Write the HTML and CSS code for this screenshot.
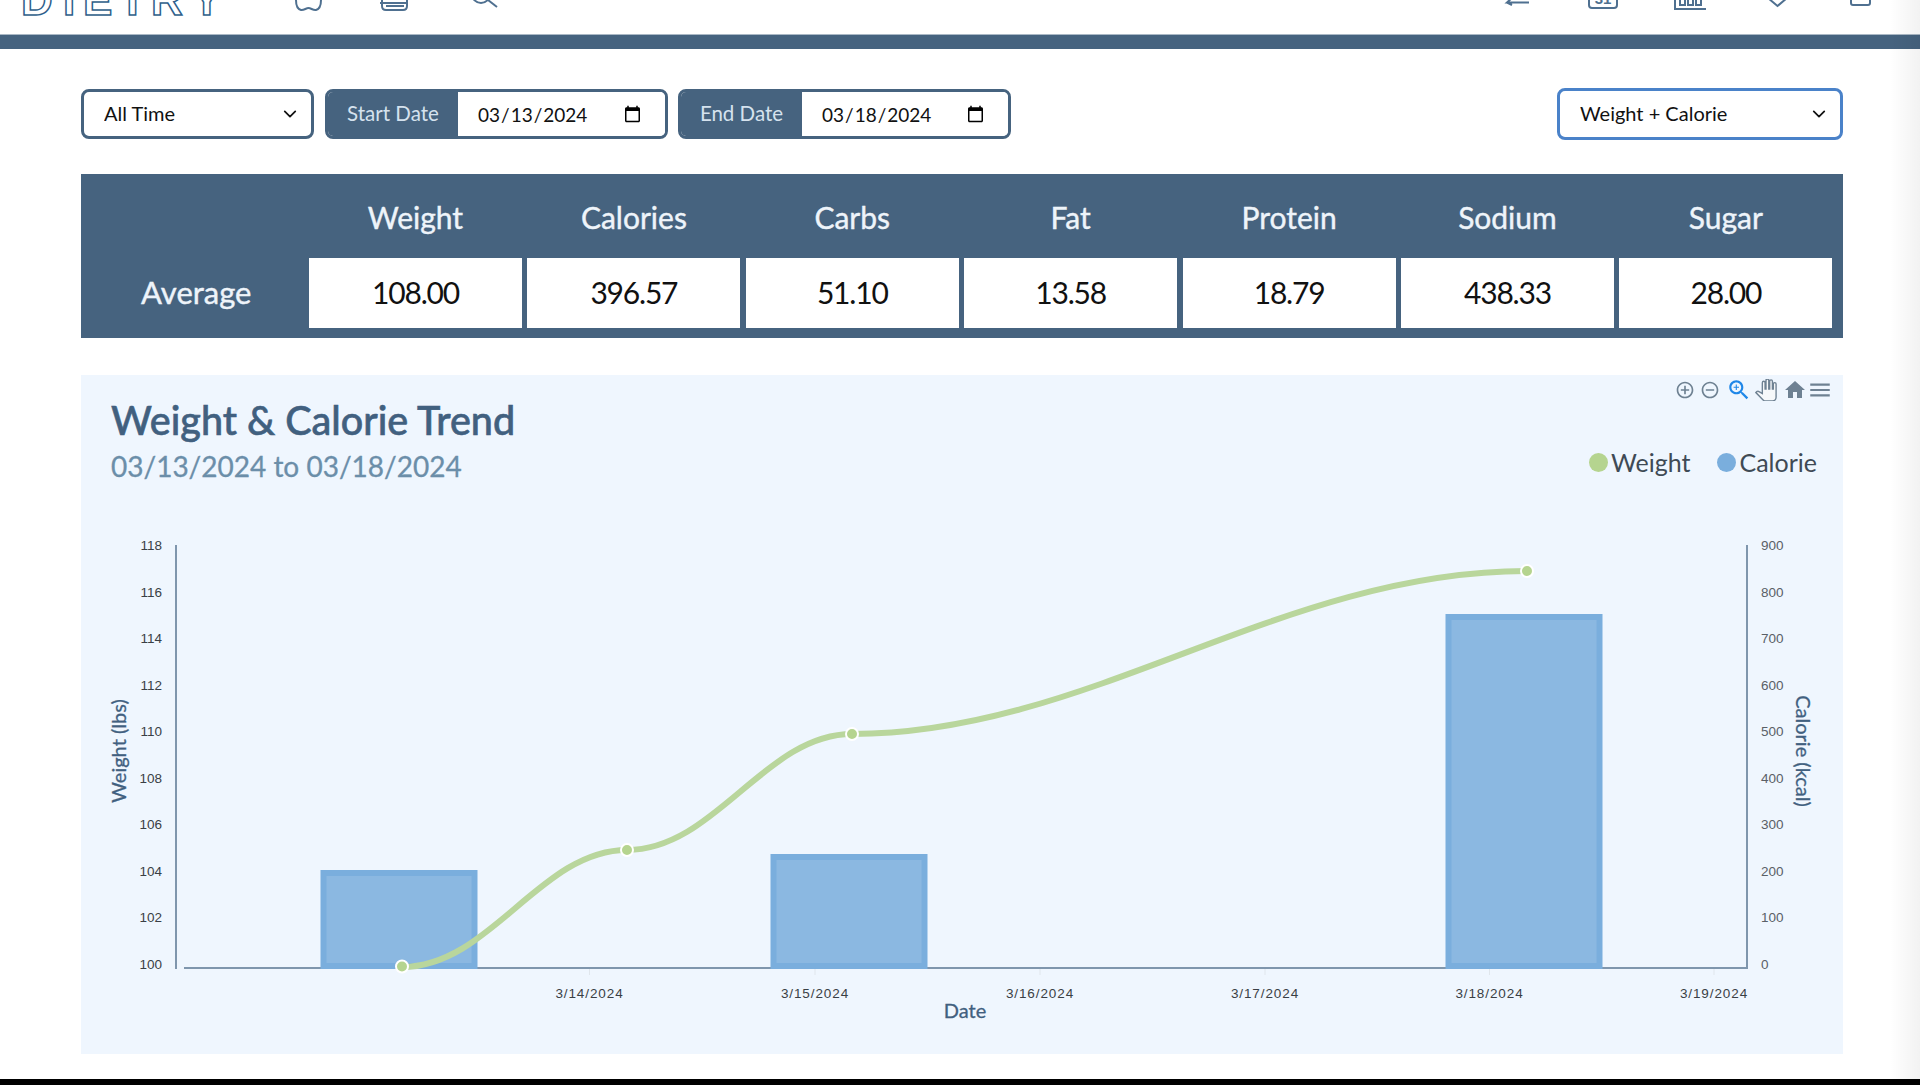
FILE: index.html
```html
<!DOCTYPE html>
<html lang="en">
<head>
    <meta charset="UTF-8">
    <title>Dietry - Trends</title>
    <link rel="stylesheet" href="styles.css">
</head>
<body>
<header class="topnav">
    <svg class="logo" viewBox="0 0 230 34">
        <text class="logo-text" x="21 63 83 119 151 192" y="15">DIETRY</text>
    </svg>
    <svg class="nav-icon icon-apple" viewBox="290 0 40 34">
        <path d="M296 0C296 5 297 9 301 10C304 10.500 306 8 308.500 8C311 8 313 10.500 316 10C320 9 321 5 321 0"/>
    </svg>
    <svg class="nav-icon icon-food" viewBox="375 0 40 34">
        <path d="M382 -2V6Q382 10 386 10H403Q407 10 407 6V-2M380 3H408M386 6H404"/>
    </svg>
    <svg class="nav-icon icon-search" viewBox="465 0 40 34">
        <circle cx="481" cy="-6" r="9"/>
        <path d="M488 0L497 7"/>
    </svg>
    <svg class="nav-icon icon-arrow" viewBox="1500 0 40 34">
        <path d="M1513 -3L1507 2.500H1529M1507 2.500L1512 5"/>
    </svg>
    <svg class="nav-icon icon-cal" viewBox="1580 0 40 34">
        <rect x="1589" y="-10" width="28" height="18" rx="3"/>
        <text class="cal-day" x="1603" y="4">31</text>
    </svg>
    <svg class="nav-icon icon-bars" viewBox="1670 0 40 34">
        <path d="M1675 -5V9H1706"/>
        <rect x="1680" y="-4" width="5" height="9"/>
        <rect x="1688" y="-4" width="5" height="9"/>
        <rect x="1696" y="-4" width="5" height="9"/>
    </svg>
    <svg class="nav-icon icon-heart" viewBox="1760 0 40 34">
        <path d="M1768 -2L1777.500 6L1787 -2"/>
    </svg>
    <svg class="nav-icon icon-box" viewBox="1845 0 40 34">
        <path d="M1851 -4V3Q1851 5 1853 5H1868Q1870 5 1870 3V-4"/>
    </svg>
</header>
<div class="navbar-strip"></div>

<main class="content">
    <div class="filters">
        <select class="select-box range-select">
            <option>All Time</option>
        </select>
        <div class="date-group start-group">
            <span class="date-label">Start Date</span>
            <input class="date-input" type="date" value="2024-03-13">
        </div>
        <div class="date-group end-group">
            <span class="date-label">End Date</span>
            <input class="date-input" type="date" value="2024-03-18">
        </div>
        <select class="select-box chart-select">
            <option>Weight + Calorie</option>
        </select>
    </div>

    <section class="averages">
        <div class="avg-corner"></div>
        <div class="avg-head">Weight</div>
        <div class="avg-head">Calories</div>
        <div class="avg-head">Carbs</div>
        <div class="avg-head">Fat</div>
        <div class="avg-head">Protein</div>
        <div class="avg-head">Sodium</div>
        <div class="avg-head">Sugar</div>
        <div class="avg-title">Average</div>
        <div class="avg-value">108.00</div>
        <div class="avg-value">396.57</div>
        <div class="avg-value">51.10</div>
        <div class="avg-value">13.58</div>
        <div class="avg-value">18.79</div>
        <div class="avg-value">438.33</div>
        <div class="avg-value">28.00</div>
    </section>

    <section class="chart-panel">
        <div class="toolbar">
            <svg class="tool tool-round" viewBox="0 0 24 24"><path d="M13 7h-2v4H7v2h4v4h2v-4h4v-2h-4V7zm-1-5C6.480 2 2 6.480 2 12s4.480 10 10 10 10-4.480 10-10S17.520 2 12 2zm0 18c-4.410 0-8-3.590-8-8s3.590-8 8-8 8 3.590 8 8-3.590 8-8 8z"/></svg>
            <svg class="tool tool-round" viewBox="0 0 24 24"><path d="M7 11v2h10v-2H7zm5-9C6.480 2 2 6.480 2 12s4.480 10 10 10 10-4.480 10-10S17.520 2 12 2zm0 18c-4.410 0-8-3.590-8-8s3.590-8 8-8 8 3.590 8 8-3.590 8-8 8z"/></svg>
            <svg class="tool tool-zoom" viewBox="0 0 24 24"><path d="M15.500 14h-.79l-.28-.27C15.410 12.590 16 11.110 16 9.500 16 5.910 13.090 3 9.500 3S3 5.910 3 9.500 5.910 16 9.500 16c1.610 0 3.090-.59 4.230-1.570l.27.28v.79l5 4.990L20.490 19l-4.990-5zm-6 0C7.010 14 5 11.990 5 9.500S7.010 5 9.500 5 14 7.010 14 9.500 11.990 14 9.500 14z"/><path d="M12 10h-2v2H9v-2H7V9h2V7h1v2h2v1z"/></svg>
            <svg class="tool tool-hand" viewBox="0 0 24 24"><path d="M23 5.500V20c0 2.200-1.800 4-4 4h-7.300c-1.080 0-2.100-.43-2.850-1.190L1 14.830s1.260-1.230 1.300-1.250c.22-.19.49-.29.79-.29.22 0 .42.06.6.16.04.01 4.310 2.460 4.310 2.460V4c0-.83.67-1.500 1.500-1.500S11 3.170 11 4v7h1V1.500c0-.83.67-1.500 1.500-1.500S15 .67 15 1.500V11h1V2.500c0-.83.67-1.500 1.500-1.500s1.500.67 1.500 1.500V11h1V5.500c0-.83.67-1.500 1.500-1.500s1.500.67 1.500 1.500z"/></svg>
            <svg class="tool tool-home" viewBox="0 0 24 24"><path d="M10 20v-6h4v6h5v-8h3L12 3 2 12h3v8z"/></svg>
            <svg class="tool tool-menu" viewBox="0 0 24 24"><path d="M3 18h18v-2H3v2zm0-5h18v-2H3v2zm0-7v2h18V6H3z"/></svg>
        </div>

        <div class="chart-head">
            <div>
                <h2 class="chart-title">Weight &amp; Calorie Trend</h2>
                <p class="chart-range">03/13/2024 to 03/18/2024</p>
            </div>
            <div class="legend">
                <span class="legend-item"><i class="dot dot-weight"></i>Weight</span>
                <span class="legend-item"><i class="dot dot-calorie"></i>Calorie</span>
            </div>
        </div>

        <svg class="chart" viewBox="81 530 1762 524">
            <!-- axes -->
            <path class="axis" d="M176 545V969M184 968H1747M1747 545V969"/>
            <path class="tick" d="M589.500 969V975M815 969V975M1040 969V975M1265 969V975M1489.500 969V975M1714 969V975"/>

            <g class="tick-label left-labels">
                <text x="162" y="550">118</text>
                <text x="162" y="596.500">116</text>
                <text x="162" y="643">114</text>
                <text x="162" y="689.500">112</text>
                <text x="162" y="736">110</text>
                <text x="162" y="782.500">108</text>
                <text x="162" y="829">106</text>
                <text x="162" y="875.500">104</text>
                <text x="162" y="922">102</text>
                <text x="162" y="968.500">100</text>
            </g>
            <g class="tick-label right-labels">
                <text x="1761" y="550">900</text>
                <text x="1761" y="596.500">800</text>
                <text x="1761" y="643">700</text>
                <text x="1761" y="689.500">600</text>
                <text x="1761" y="736">500</text>
                <text x="1761" y="782.500">400</text>
                <text x="1761" y="829">300</text>
                <text x="1761" y="875.500">200</text>
                <text x="1761" y="922">100</text>
                <text x="1761" y="968.500">0</text>
            </g>
            <g class="tick-label date-labels">
                <text x="589.500" y="998">3/14/2024</text>
                <text x="815" y="998">3/15/2024</text>
                <text x="1040" y="998">3/16/2024</text>
                <text x="1265" y="998">3/17/2024</text>
                <text x="1489.500" y="998">3/18/2024</text>
                <text x="1714" y="998">3/19/2024</text>
            </g>

            <text class="axis-title" x="965" y="1018">Date</text>
            <text class="axis-title" transform="translate(126 751) rotate(-90)">Weight (lbs)</text>
            <text class="axis-title" transform="translate(1796 751) rotate(90)">Calorie (kcal)</text>

            <!-- calorie bars -->
            <rect class="bar" x="323.500" y="873" width="151" height="93"/>
            <rect class="bar" x="773.500" y="857" width="151" height="109"/>
            <rect class="bar" x="1448.500" y="617" width="151" height="349"/>

            <!-- weight line -->
            <path class="trend" d="M402 967C490 967 540 850 627 850C715 850 765 734 852 734C1090 734 1280 571 1527 571"/>
            <circle class="point" cx="402" cy="966.500" r="6"/>
            <circle class="point" cx="627" cy="850" r="6"/>
            <circle class="point" cx="852" cy="734" r="6"/>
            <circle class="point" cx="1527" cy="571" r="6"/>
        </svg>
    </section>
</main>

<div class="page-shadow"></div>
<footer class="bottom-edge"></footer>
</body>
</html>
```

FILE: styles.css
```css
*{
    margin: 0;
    padding: 0;
    box-sizing: border-box;
}

html, body{
    height: 1085px;
    overflow: hidden;
}

body{
    position: relative;
    display: flex;
    flex-direction: column;
    background-color: #fff;
    font-family: "Lato", "Open Sans", sans-serif;
    color: #111;
}

/* top navigation, cut off by the top of the window */
.topnav{
    display: flex;
    height: 34px;
    overflow: hidden;
}

.logo{
    width: 230px;
    height: 34px;
    overflow: visible;
}

.logo-text{
    font-family: "Liberation Sans", sans-serif;
    font-size: 44px;
    font-weight: 700;
    fill: #fff;
    stroke: #2f5f8b;
    stroke-width: 1.500px;
}

.nav-icon{
    width: 40px;
    height: 34px;
    fill: none;
    stroke: #4f7090;
    stroke-width: 2px;
    overflow: visible;
}

.cal-day{
    font-family: "Liberation Sans", sans-serif;
    font-size: 15px;
    font-weight: 700;
    text-anchor: middle;
    fill: #4f7090;
    stroke: none;
}

.icon-apple{ margin-left: 60px; }
.icon-food{ margin-left: 45px; }
.icon-search{ margin-left: 50px; }
.icon-arrow{ margin-left: auto; }
.icon-cal{ margin-left: 40px; }
.icon-bars{ margin-left: 50px; }
.icon-heart{ margin-left: 50px; }
.icon-box{ margin-left: 45px; margin-right: 35px; }

.navbar-strip{
    height: 15px;
    background-color: #46637f;
    border-top: 1px solid #aab8c5;
}

.content{
    flex: 1;
    padding: 40px 77px 0 81px;
}

/* filter row */
.filters{
    display: flex;
    align-items: center;
    height: 50px;
}

.select-box{
    appearance: none;
    height: 50px;
    padding: 0 20px 2px;
    border: 3px solid #46637f;
    border-radius: 8px;
    background: #fff url("data:image/svg+xml,%3Csvg xmlns='http://www.w3.org/2000/svg' viewBox='0 0 16 16'%3E%3Cpath fill='none' stroke='%23111' stroke-width='2' stroke-linecap='round' stroke-linejoin='round' d='M2 5l6 6 6-6'/%3E%3C/svg%3E") no-repeat right 14px center;
    background-size: 14px 14px;
    font-family: "Lato", sans-serif;
    font-size: 20px;
    color: #111;
}

.range-select{
    width: 233px;
    margin-right: 11px;
}

.chart-select{
    width: 286px;
    height: 52px;
    margin-left: auto;
    border-color: #4a82c9;
}

.date-group{
    display: flex;
    height: 50px;
    border: 3px solid #46637f;
    border-radius: 8px;
    overflow: hidden;
}

.start-group{
    width: 343px;
    margin-right: 10px;
}

.end-group{
    width: 333px;
}

.date-label{
    display: flex;
    align-items: center;
    justify-content: center;
    padding-bottom: 2px;
    background-color: #46637f;
    color: #d5e2ee;
    font-size: 20.500px;
}

.start-group .date-label{
    width: 130px;
}

.end-group .date-label{
    width: 121px;
}

.date-input{
    flex: 1;
    min-width: 0;
    padding: 0 21px 0 19px;
    border: 0;
    outline: 0;
    background-color: #fff;
    font-family: "Lato", sans-serif;
    font-size: 19px;
    color: #111;
}

/* averages table */
.averages{
    display: grid;
    grid-template-columns: 222.600px repeat(7, 213px);
    grid-template-rows: 84px 70px;
    column-gap: 5.400px;
    height: 164px;
    margin-top: 35px;
    background-color: #46637f;
}

.avg-head, .avg-title{
    display: flex;
    align-items: center;
    justify-content: center;
    padding-bottom: 2px;
    color: #eef4fa;
    font-size: 30px;
    -webkit-text-stroke: .4px #eef4fa;
}

.avg-head{
    padding-top: 4px;
}

.avg-title{
    font-size: 31px;
    padding-left: 8px;
}

.avg-value{
    display: flex;
    align-items: center;
    justify-content: center;
    padding-bottom: 2px;
    background-color: #fff;
    font-size: 30px;
    letter-spacing: -1.200px;
    color: #111;
}

/* chart */
.chart-panel{
    position: relative;
    height: 679px;
    margin-top: 37px;
    background-color: #eff6fe;
}

.toolbar{
    position: absolute;
    top: 2px;
    right: 10px;
    display: flex;
    align-items: center;
    gap: 5px;
}

.tool{
    width: 24px;
    height: 24px;
    fill: #6e8192;
}

.tool-round{
    width: 20px;
    height: 20px;
}

.tool-zoom{
    width: 26px;
    height: 26px;
    margin-left: 1px;
    fill: #1f87e8;
}

.tool-hand{
    width: 22px;
    height: 22px;
    margin-left: -2px;
    margin-right: 1px;
    fill: #f6f8fa;
    stroke: #6e8192;
    stroke-width: 1.500px;
}

.tool-menu{
    width: 26px;
    height: 26px;
    margin-left: -5px;
}

.chart-head{
    display: flex;
    justify-content: space-between;
    height: 155px;
    padding: 22px 26px 0 30px;
}

.chart-title{
    font-size: 39.500px;
    line-height: 46px;
    font-weight: 500;
    color: #41607f;
    -webkit-text-stroke: .6px #41607f;
}

.chart-range{
    margin-top: 5px;
    font-size: 28px;
    line-height: 36px;
    color: #6b8ea9;
    -webkit-text-stroke: .3px #6b8ea9;
}

.legend{
    display: flex;
    gap: 27px;
    margin-top: 50px;
    height: 30px;
}

.legend-item{
    display: flex;
    align-items: center;
    gap: 3px;
    font-size: 25px;
    color: #3f4a55;
}

.dot{
    width: 19px;
    height: 19px;
    border-radius: 50%;
}

.dot-weight{
    background-color: #b5d48f;
}

.dot-calorie{
    background-color: #7aaedd;
}

.chart{
    display: block;
    width: 1762px;
    height: 524px;
}

.axis{
    fill: none;
    stroke: #7f96ad;
    stroke-width: 2px;
}

.tick{
    fill: none;
    stroke: #e0e6ec;
    stroke-width: 1px;
}

.tick-label{
    font-family: "Liberation Sans", sans-serif;
    font-size: 13.500px;
    fill: #3a3f45;
}

.left-labels{
    text-anchor: end;
}

.right-labels{
    fill: #5a6067;
}

.date-labels{
    text-anchor: middle;
    letter-spacing: .9px;
}

.axis-title{
    font-family: "Lato", sans-serif;
    font-size: 20px;
    text-anchor: middle;
    fill: #41607f;
    stroke: #41607f;
    stroke-width: .3px;
}

.bar{
    fill: #8bb8e1;
    stroke: #7aaedd;
    stroke-width: 6px;
}

.trend{
    fill: none;
    stroke: #b9d69c;
    stroke-width: 6px;
}

.point{
    fill: #b5d48f;
    stroke: #fff;
    stroke-width: 2px;
}

/* grey edge on the right of the window, black strip at the bottom */
.page-shadow{
    position: absolute;
    top: 0;
    right: 0;
    bottom: 0;
    width: 30px;
    background: linear-gradient(to right, rgba(0, 0, 0, 0), rgba(0, 0, 0, .05));
}

.bottom-edge{
    height: 6px;
    background-color: #000;
}
```
